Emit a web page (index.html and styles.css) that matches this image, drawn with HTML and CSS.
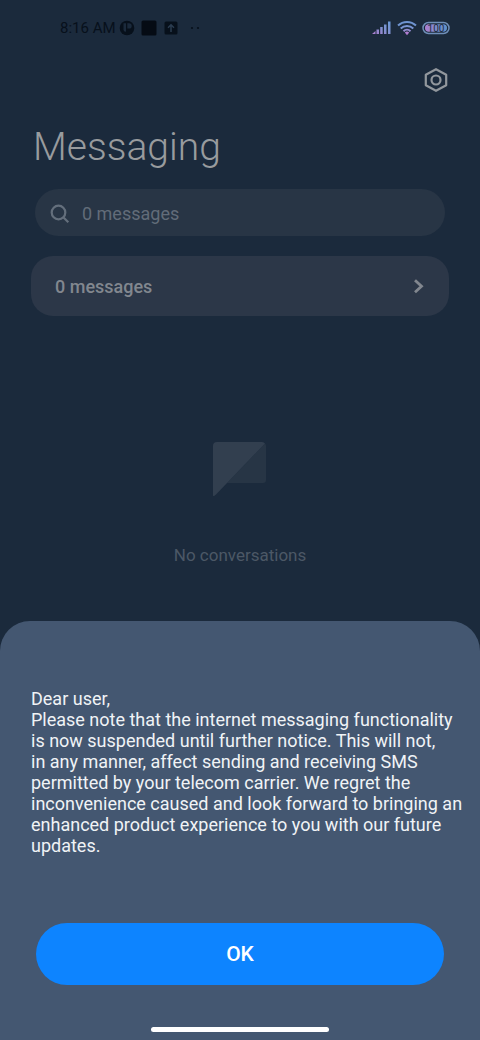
FILE: index.html
```html
<!DOCTYPE html>
<html lang="en">
<head>
<meta charset="utf-8">
<meta name="viewport" content="width=device-width, initial-scale=1">
<title>Messaging</title>
<link rel="stylesheet" href="styles.css">
</head>
<body>
<div class="screen">
  <header class="status">
    <div class="status-left">
      <time class="clock">8:16 AM</time>
      <svg class="status-icon" width="16" height="16" viewBox="0 0 16 16" aria-hidden="true">
        <circle cx="8" cy="8" r="7.3" fill="#07101b"/>
        <path d="M4.500 3.200h2.500v8.500a2.500 2.500 0 0 1-2.500-2.500z" fill="#1b2a3c"/>
        <path d="M8.300 3.200h1.700a2.700 2.700 0 0 1 0 5.400H8.300z" fill="#1b2a3c"/>
      </svg>
      <svg class="status-icon" width="16" height="16" viewBox="0 0 16 16" aria-hidden="true">
        <rect x="0.5" y="0.5" width="15" height="15" rx="1.5" fill="#050b14"/>
      </svg>
      <svg class="status-icon" width="16" height="16" viewBox="0 0 16 16" aria-hidden="true">
        <rect x="1.5" y="1.5" width="13" height="13" rx="1.5" fill="#07101b"/>
        <path d="M8 12V5M5 7.8l3-3 3 3" fill="none" stroke="#2b3c50" stroke-width="1.5"/>
      </svg>
      <svg class="status-icon" width="20" height="16" viewBox="0 0 20 16" aria-hidden="true">
        <circle cx="7" cy="8" r="1.1" fill="#07101b"/><circle cx="13" cy="8" r="1.1" fill="#07101b"/>
      </svg>
    </div>
    <div class="status-right">
      <svg width="20" height="16" viewBox="0 0 20 16" role="img" aria-label="Signal">
        <defs><linearGradient id="tint" x1="0" y1="1" x2="1" y2="0"><stop offset="0" stop-color="#b07dd0"/><stop offset="0.5" stop-color="#7f8fce"/><stop offset="1" stop-color="#6a9bd8"/></linearGradient></defs>
        <path d="M0 14l3.500-3V14zM4.500 9.500h2.500V14H4.500zM8.200 7h2.500v7H8.200zM12 4.500h2.500V14H12zM16 1.500h2.500V14H16z" fill="url(#tint)"/>
      </svg>
      <svg width="20" height="16" viewBox="0 0 20 16" role="img" aria-label="Wi-Fi">
        <g fill="none" stroke="#6f94d0" stroke-width="2">
          <path d="M1 5.500a13 13 0 0 1 18 0"/>
          <path d="M3.700 8.500a9 9 0 0 1 12.600 0" stroke="#7a95d2"/>
          <path d="M6.500 11.200a5 5 0 0 1 7 0" stroke="#948dd0"/>
        </g>
        <path d="M7.800 12.600a3 3 0 0 1 4.400 0L10 15.200z" fill="#b07dd0"/>
      </svg>
      <svg width="28" height="16" viewBox="0 0 28 16" role="img" aria-label="Battery 100%">
        <defs><linearGradient id="charge"><stop offset="0" stop-color="#b07dd0"/><stop offset="0.5" stop-color="#7f8ccb"/><stop offset="1" stop-color="#5f91cb"/></linearGradient></defs>
        <rect x="1" y="2.500" width="26" height="11" rx="5.500" fill="none" stroke="#6f8eb8" stroke-width="1.500"/>
        <rect x="3" y="4.300" width="22" height="7.400" rx="3.700" fill="url(#charge)"/>
        <text class="battery-text" x="14" y="11.500" text-anchor="middle">100</text>
      </svg>
    </div>
  </header>

  <main class="app">
    <div class="toolbar">
      <button class="settings" type="button" aria-label="Settings">
        <svg width="28" height="28" viewBox="0 0 28 28" fill="none" stroke="#92979d" stroke-width="2.200">
          <path d="M14 3.200l10.200 5.500v10.600L14 24.800 3.800 19.300V8.700z" stroke-linejoin="round"/>
          <circle cx="14" cy="14" r="4.500"/>
        </svg>
      </button>
    </div>
    <h1 class="title">Messaging</h1>
    <label class="search">
      <svg width="20" height="20" viewBox="0 0 20 20" fill="none" stroke="#646f7c" stroke-width="2.200" aria-hidden="true">
        <circle cx="8.500" cy="8.500" r="6.800"/><path d="M13.300 13.300l5 5"/>
      </svg>
      <input class="search-input" type="search" placeholder="0 messages" aria-label="Search messages">
    </label>
    <button class="card" type="button">
      <span>0 messages</span>
      <svg width="12" height="16" viewBox="0 0 12 16" fill="none" stroke="#82878f" stroke-width="2.800" aria-hidden="true">
        <path d="M2 2.200l6.500 6L2 14.200"/>
      </svg>
    </button>
    <section class="empty">
      <svg width="54" height="54" viewBox="0 0 54 54" aria-hidden="true">
        <path d="M52 1.500Q53 2.500 53 4V38Q53 41 50 41H14z" fill="#273545"/>
        <path d="M4 0H49Q51 0 52 1.500L3 52.500Q1.500 54 0 54V4Q0 0 4 0z" fill="#323f4f"/>
      </svg>
      <p class="empty-text">No conversations</p>
    </section>
  </main>

  <section class="sheet" role="dialog" aria-labelledby="notice">
    <p class="notice" id="notice">Dear user,<br>Please note that the internet messaging functionality is now suspended until further notice. This will not,<br>in any manner, affect sending and receiving SMS permitted by your telecom carrier. We regret the inconvenience caused and look forward to bringing an enhanced product experience to you with our future updates.</p>
    <button class="ok" type="button">OK</button>
    <div class="home-bar"></div>
  </section>
</div>
</body>
</html>
```

FILE: styles.css
```css
* {
  box-sizing: border-box;
}

body {
  margin: 0;
  background: #1b2a3c;
  font-family: Roboto, "Liberation Sans", sans-serif;
}

button,
input {
  margin: 0;
  padding: 0;
  border: 0;
  background: none;
  font: inherit;
  color: inherit;
}

svg {
  display: block;
  flex: none;
}

.screen {
  display: flex;
  flex-direction: column;
  min-height: 100vh;
}

.status {
  display: flex;
  justify-content: space-between;
  align-items: center;
  height: 56px;
  padding: 0 30px 0 60px;
}

.status-left {
  display: flex;
  align-items: center;
  gap: 6px;
}

.clock {
  margin-right: -3px;
  font-size: 15px;
  line-height: 20px;
  color: #07101b;
}

.status-right {
  display: flex;
  align-items: center;
  gap: 5px;
}

.battery-text {
  font-size: 10px;
  fill: #1b2a3c;
}

.app {
  flex: 1;
  display: flex;
  flex-direction: column;
  padding: 10px 31px 0;
}

.toolbar {
  display: flex;
  justify-content: flex-end;
  margin-right: -1px;
}

.title {
  margin: 29px 2px 0;
  font-size: 39px;
  font-weight: 300;
  line-height: 48px;
  color: #989b9e;
}

.search {
  display: flex;
  align-items: center;
  gap: 12px;
  height: 47px;
  margin: 18px 4px 0;
  padding: 2px 15px 0;
  border-radius: 24px;
  background: #283545;
}

.search-input {
  flex: 1;
  min-width: 0;
  font-size: 18px;
  line-height: 24px;
  outline: 0;
}

.search-input::placeholder {
  color: #626c79;
  opacity: 1;
}

.card {
  display: flex;
  justify-content: space-between;
  align-items: center;
  height: 60px;
  margin-top: 20px;
  padding: 0 24px;
  border-radius: 22px;
  background: #2c3748;
  font-size: 18px;
  font-weight: 500;
  color: #82878f;
}

.empty {
  display: flex;
  flex-direction: column;
  align-items: center;
  gap: 48px;
  margin-top: 126px;
  padding-bottom: 24px;
}

.empty-text {
  margin: 0;
  font-size: 17px;
  line-height: 22px;
  color: #4c5866;
}

.sheet {
  display: flex;
  flex-direction: column;
  padding: 67px 12px 8px 31px;
  border-radius: 30px 30px 0 0;
  background: #445771;
}

.notice {
  margin: 0;
  font-size: 18px;
  line-height: 21px;
  color: #f0f3f6;
}

.ok {
  height: 62px;
  margin: 67px 24px 0 5px;
  border-radius: 31px;
  background: #0d84ff;
  font-size: 21px;
  font-weight: 500;
  color: #fff;
}

.home-bar {
  align-self: center;
  width: 178px;
  height: 5px;
  margin: 42px 19px 0 0;
  border-radius: 3px;
  background: #fff;
}
```
